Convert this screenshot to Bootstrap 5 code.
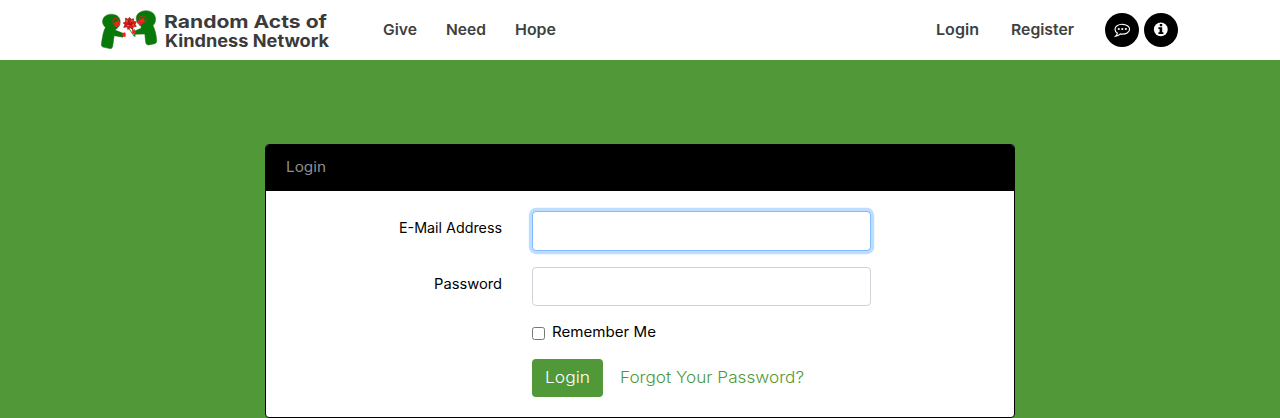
<!DOCTYPE html>
<html lang="en">
<head>
<meta charset="utf-8">
<meta name="viewport" content="width=device-width, initial-scale=1">
<title>Random Acts of Kindness Network</title>
<link href="https://cdn.jsdelivr.net/npm/bootstrap@5.3.0/dist/css/bootstrap.min.css" rel="stylesheet">
<style>
html, body { height: 418px; overflow: hidden; }
body { background: #519839; font-family: Inter, "Open Sans", sans-serif; font-size: 14px; color: #000; }
.site-bar { height: 60px; padding: 0 102px 0 100px; background: #fff; }
.brand-art { width: 232px; height: 50px; display: block; }
.brand-art text { font: 700 18px Inter, sans-serif; fill: #3b3b3b; }
.brand-art text.second { font-size: 17px; }
.site-bar .nav-link { color: #404040; font-size: 15px; font-weight: 600; line-height: 22px; padding: 0; white-space: nowrap; }
.round-btn { width: 34px; height: 34px; background: #000; }
.login-wrap { width: 750px; margin-top: 84px; }
.login-card { border: 1px solid #000; border-radius: 4px; height: 274px; --bs-card-inner-border-radius: 3px; color: #000; }
.login-card .card-header { background: #000; color: #8f8f8f; padding: 12px 20px; height: 46px; line-height: 21px; border: 0; }
.login-card .card-body { padding: 20.4px 20px 20px; }
.login-card .row { --bs-gutter-x: 30px; }
.login-card .form-control { height: 39.4px; border-radius: 4px; border-color: #ced4da; }
.login-card .form-control:focus, .login-card .form-control.active { border-color: #80bdff; box-shadow: 0 0 0 3.2px rgba(0,123,255,.25); }
.login-card .col-form-label { padding: 7px 15px; line-height: 21px; }
.remember { height: 20.8px; line-height: 20px; }
.remember input { width: 13px; height: 13px; margin: 2px 7px 0 0; }
.btn-green { background: #519839; color: #fff; width: 71px; height: 38px; padding: 0; border: 0; border-radius: 4px; font-weight: 300; }
.btn-forgot { color: #519839; margin-left: 17px; padding: 0; border: 0; text-decoration: none; font-weight: 300; }
.fit { display: block; overflow: visible; }
.fit text { fill: currentColor; }
</style>
</head>
<body>
<nav class="site-bar d-flex align-items-center">
  <a href="#" aria-label="Random Acts of Kindness Network">
    <svg class="brand-art" viewBox="0 0 232 50">
      <g fill="#087809" stroke="#1d6b1d" stroke-width=".5">
        <path d="M5.5 22.5C1.5 19 1.8 14 5 11.3c4-3.2 10.500-2.600 13.500.7 2.500 3 2.200 8-.5 10.500q-1.500 1.500-3 2.500l8.800 3.600-.9 3.600-8.700-1.500-1.600 11q-.5 2.200-3 1.900l-6.600-1.500q-2.200-.8-1.600-3.300C2.500 33 3 26.500 5.500 22.500Z"/>
        <path d="M40 20.500c-4.500-3.500-5-9-1.500-12.200 4.300-4 12.500-3.300 15.500.9 2.500 3.800 2 8.300-1 11.300 2.200 4.500 3.400 10 3.700 15.200q0 2.400-2 3l-6 1.200q-2.700.2-3-2.400l-.9-8.500-10 .3-1.300-2.800 7.500-3.200q1-1.500-1-2.800Z"/>
      </g>
      <path d="m28 22 6 9m-2-8 3 9m-1-8 1 7" stroke="#178017" stroke-width=".9" fill="none"/>
      <g fill="#ff1e21">
        <path d="m14 18 5-2.500q1.500 2 .8 4.500l-3.300 2.200-2.500-2ZM43.500 13l1.200 3.500-4 3.500-3-1.500.8-3.500Z"/>
        <path d="m22.300 28.200 2.500-1 1 1.600-.4 3.100-2.900-.5ZM32.500 24.800l2.300.6 1.200 2-1.700 1.500-2.300-1Z"/>
      </g>
      <g fill="none" stroke="#c82a1c" stroke-width=".9"><circle cx="15.800" cy="16.300" r="3.200"/><circle cx="42.500" cy="14.500" r="3.500"/></g>
      <path d="m25.500 13 2.500 1.200 1.500-1.900 1.600 2 2.500-.6-.1 2.600 2.900.6-1.300 2.300 1.200 2.400-3 .2-.6 2.600-2.500-1.600-2.400 1.800-.5-2.800-3.600.6 1.200-2.700-1.700-1.800 2.400-1.200Z" fill="#de1917" stroke="#8c160f" stroke-width=".6"/>
      <path d="m28.500 15 .5 4m3-3-.5 4m-5-1 5 .5" stroke="#761410" stroke-width=".6"/>
      <g fill="#ffa12e"><circle cx="27" cy="16" r=".65"/><circle cx="32" cy="16" r=".65"/><circle cx="28" cy="20.500" r=".65"/><circle cx="33" cy="20" r=".65"/></g>
      <text x="64" y="23" textLength="163" lengthAdjust="spacingAndGlyphs">Random Acts of</text>
      <text class="second" x="65" y="41.500" textLength="164" lengthAdjust="spacingAndGlyphs">Kindness Network</text>
    </svg>
  </a>
  <div class="d-flex" style="margin-left:51px;gap:29px">
    <a class="nav-link" href="#"><svg class="fit" width="34" height="22"><text y="16" textLength="34" lengthAdjust="spacingAndGlyphs">Give</text></svg></a>
    <a class="nav-link" href="#"><svg class="fit" width="40" height="22"><text y="16" textLength="40" lengthAdjust="spacingAndGlyphs">Need</text></svg></a>
    <a class="nav-link" href="#"><svg class="fit" width="41" height="22"><text y="16" textLength="41" lengthAdjust="spacingAndGlyphs">Hope</text></svg></a>
  </div>
  <div class="d-flex align-items-center ms-auto">
    <a class="nav-link" href="#"><svg class="fit" width="43" height="22"><text y="16" textLength="43" lengthAdjust="spacingAndGlyphs">Login</text></svg></a>
    <a class="nav-link" href="#" style="margin:0 31px 0 32px"><svg class="fit" width="63" height="22"><text y="16" textLength="63" lengthAdjust="spacingAndGlyphs">Register</text></svg></a>
    <a class="round-btn rounded-circle" href="#" aria-label="Messages">
      <svg class="d-block" width="34" height="34" viewBox="0 0 34 34"><path d="M17.300 11.300c4.200 0 7.300 2.200 7.300 4.900s-3.100 4.900-7.300 4.900q-1 0-2-.2-2 2-4.700 2.400 1.600-1.400 1.700-3.200-2.300-1.500-2.300-3.900c0-2.700 3.100-4.900 7.300-4.900Z" fill="none" stroke="#fff" stroke-width="1.150"/><g fill="#fff"><circle cx="13.800" cy="16" r="1.100"/><circle cx="17.300" cy="16" r="1.100"/><circle cx="20.800" cy="16" r="1.100"/></g></svg>
    </a>
    <a class="round-btn rounded-circle" href="#" aria-label="Information" style="margin-left:5px">
      <svg class="d-block" width="34" height="34" viewBox="0 0 34 34"><circle cx="16.800" cy="16.400" r="6.900" fill="#fff"/><path d="M15.800 11h2.400v2.200h-2.400ZM14.400 14.300h3.800v4.900h1.200v1.700h-5v-1.700h1.200V16h-1.200Z"/></svg>
    </a>
  </div>
</nav>
<main class="login-wrap mx-auto">
  <div class="card login-card">
    <div class="card-header"><svg class="fit" width="40" height="21"><text y="15" textLength="40" lengthAdjust="spacingAndGlyphs">Login</text></svg></div>
    <form class="card-body">
      <div class="row mb-3">
        <label for="email" class="col-4 col-form-label d-flex justify-content-end"><svg class="fit" width="103" height="21"><text y="15" textLength="103" lengthAdjust="spacingAndGlyphs">E-Mail Address</text></svg></label>
        <div class="col-6"><input id="email" type="email" class="form-control active"></div>
      </div>
      <div class="row mb-3">
        <label for="password" class="col-4 col-form-label d-flex justify-content-end"><svg class="fit" width="68" height="21"><text y="15" textLength="68" lengthAdjust="spacingAndGlyphs">Password</text></svg></label>
        <div class="col-6"><input id="password" type="password" class="form-control"></div>
      </div>
      <div class="row mb-3">
        <div class="col-6 offset-4"><label class="remember d-flex align-items-center"><input type="checkbox"><svg class="fit" width="104" height="21"><text y="15" textLength="104" lengthAdjust="spacingAndGlyphs">Remember Me</text></svg></label></div>
      </div>
      <div class="row">
        <div class="col-8 offset-4 d-flex align-items-center">
          <button type="button" class="btn btn-green"><svg class="fit mx-auto" width="45" height="24"><text y="17" textLength="45" lengthAdjust="spacingAndGlyphs">Login</text></svg></button>
          <a class="btn btn-forgot" href="#"><svg class="fit" width="184" height="24"><text y="17" textLength="184" lengthAdjust="spacingAndGlyphs">Forgot Your Password?</text></svg></a>
        </div>
      </div>
    </form>
  </div>
</main>
</body>
</html>
